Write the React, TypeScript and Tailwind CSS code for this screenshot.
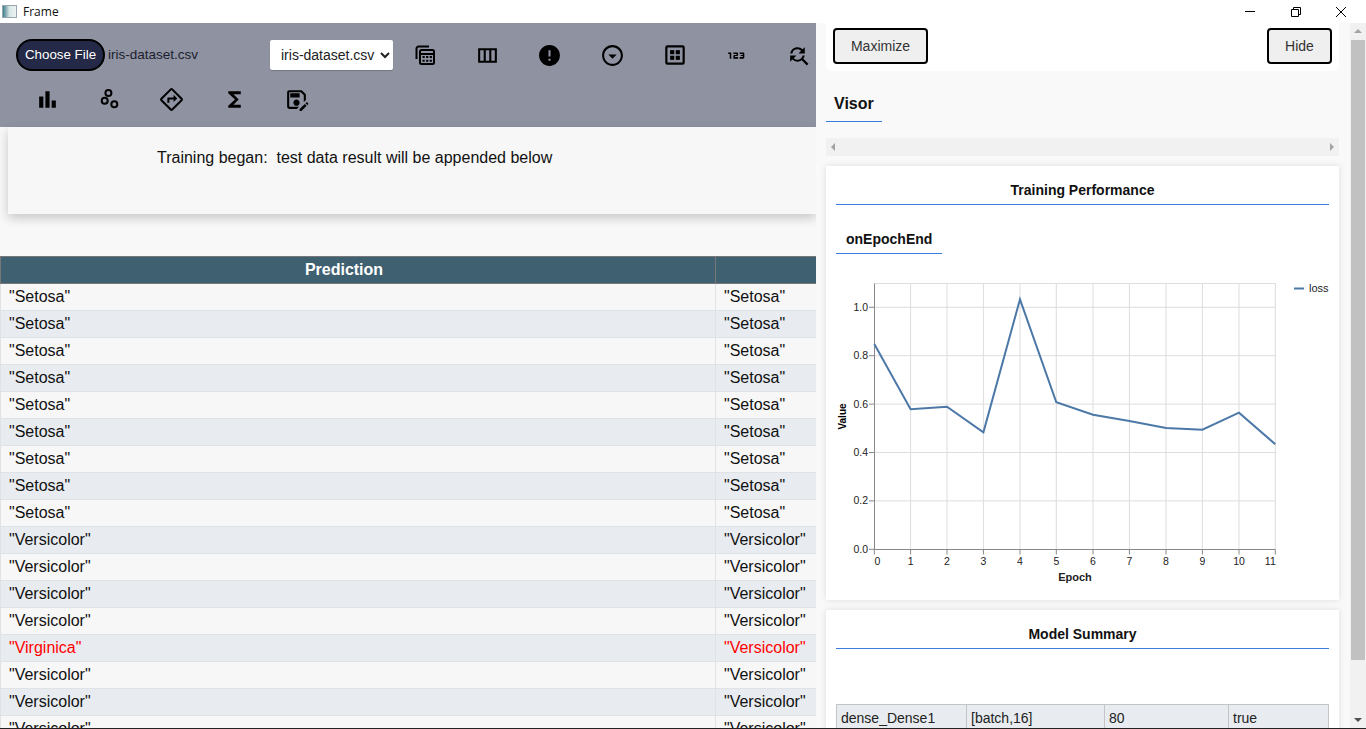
import React from "react";
import { MdBarChart, MdOutlineDirections, MdFunctions, MdOutlineSaveAs, MdError, MdOutlineArrowDropDownCircle, Md123, MdFindReplace, MdOutlineViewColumn } from "react-icons/md";

const sans = "font-['Liberation_Sans',Arial,sans-serif]";

function CalcStack() {
  return (
    <svg viewBox="0 0 24 24" className="w-[24px] h-[24px]" fill="none" stroke="#000" strokeWidth="2">
      <path d="M3.5 16V5.5a2 2 0 0 1 2-2H16" />
      <rect x="7" y="7" width="14" height="14" rx="1.5" />
      <path d="M7 11h14" />
      <path d="M9.5 14h10M9.5 17.8h10" strokeDasharray="2.2 1.4" strokeWidth="2" />
    </svg>
  );
}
function GridBox() {
  return (
    <svg viewBox="0 0 24 24" className="w-[26px] h-[26px] ml-[1px]" fill="#000">
      <path fillRule="evenodd" d="M5 3h14a2 2 0 0 1 2 2v14a2 2 0 0 1-2 2H5a2 2 0 0 1-2-2V5a2 2 0 0 1 2-2zm0 2v14h14V5H5z" />
      <rect x="7.5" y="7.5" width="3.8" height="3.8" />
      <rect x="12.7" y="7.5" width="3.8" height="3.8" />
      <rect x="7.5" y="12.7" width="3.8" height="3.8" />
      <rect x="12.7" y="12.7" width="3.8" height="3.8" />
    </svg>
  );
}
function Bubbles() {
  return (
    <svg viewBox="0 0 24 24" className="w-[24px] h-[24px]" fill="none" stroke="#000" strokeWidth="2">
      <circle cx="11.4" cy="5.9" r="3" />
      <circle cx="7.7" cy="13.7" r="3" />
      <circle cx="17.3" cy="17.3" r="3" />
    </svg>
  );
}

const rowOne = [
  <CalcStack />,
  <MdOutlineViewColumn size={25} color="#000" />,
  <MdError size={25} color="#000" />,
  <MdOutlineArrowDropDownCircle size={25} color="#000" />,
  <GridBox />,
  <Md123 size={25} color="#000" />,
  <MdFindReplace size={25} color="#000" />,
];
const rowTwo = [
  <MdBarChart size={25} color="#000" />,
  <Bubbles />,
  <MdOutlineDirections size={25} color="#000" />,
  <MdFunctions size={25} color="#000" />,
  <MdOutlineSaveAs size={25} color="#000" />,
];

const rows: [string, string, boolean?][] = [
  ...Array.from({ length: 9 }, () => ['"Setosa"', '"Setosa"'] as [string, string]),
  ...Array.from({ length: 4 }, () => ['"Versicolor"', '"Versicolor"'] as [string, string]),
  ['"Virginica"', '"Versicolor"', true],
  ...Array.from({ length: 3 }, () => ['"Versicolor"', '"Versicolor"'] as [string, string]),
];

const xs = [874.3, 910.6, 947, 983.4, 1020, 1056.3, 1093, 1129.4, 1166, 1202.4, 1239, 1275.3];
const ys = [549.3, 500.9, 452.5, 404.1, 355.7, 307.3];
const line = [
  [874.3, 344], [910.6, 409.3], [947, 406.7], [983.4, 432.3], [1020, 299.3], [1056.3, 402.3],
  [1093, 414.7], [1129.4, 421], [1166, 428], [1202.4, 429.7], [1239, 412.7], [1275.3, 444.3],
];

function Chart() {
  return (
    <svg viewBox="826 270 513 330" className="block w-[513px] h-[330px]" fontFamily="Liberation Sans, Arial, sans-serif">
      {xs.slice(1).map((x) => <line key={x} x1={x} x2={x} y1={283.5} y2={549.5} stroke="#ddd" />)}
      {ys.slice(1).map((y) => <line key={y} x1={874} x2={1275.5} y1={y} y2={y} stroke="#ddd" />)}
      <line x1={874} x2={1275.5} y1={283.5} y2={283.5} stroke="#ddd" />
      <line x1={874.5} x2={874.5} y1={283.5} y2={549.5} stroke="#888" />
      <line x1={874} x2={1275.5} y1={549.5} y2={549.5} stroke="#888" />
      {ys.map((y) => <line key={y} x1={869} x2={874} y1={y} y2={y} stroke="#888" />)}
      {xs.map((x) => <line key={x} x1={x} x2={x} y1={549.5} y2={554.5} stroke="#888" />)}
      {["0.0", "0.2", "0.4", "0.6", "0.8", "1.0"].map((t, i) => (
        <text key={t} x={868} y={ys[i] + 3.5} textAnchor="end" fontSize="10.5" fill="#222">{t}</text>
      ))}
      {xs.map((x, i) => (
        <text key={i} x={i === 11 ? x - 5 : i === 0 ? x + 3 : x} y={565} textAnchor="middle" fontSize="10.5" fill="#222">{i}</text>
      ))}
      <text x={1075} y={581} textAnchor="middle" fontSize="11" fontWeight="bold" fill="#222">Epoch</text>
      <text transform="translate(845.5 416.5) rotate(-90)" textAnchor="middle" fontSize="10" fontWeight="bold" fill="#000">Value</text>
      <polyline points={line.map((p) => p.join(",")).join(" ")} fill="none" stroke="#4c78a8" strokeWidth="2" />
      <line x1={1294} x2={1304} y1={288.5} y2={288.5} stroke="#4c78a8" strokeWidth="2" />
      <text x={1309} y={291.5} fontSize="11" fill="#222">loss</text>
    </svg>
  );
}

export default function App() {
  return (
    <div className={`${sans} w-[1366px] h-[729px] overflow-hidden flex flex-col bg-white border-b border-[#222] text-black`}>
      {/* Title bar */}
      <div className="h-[23px] shrink-0 flex items-center bg-white">
        <div className="ml-[2px] w-[15px] h-[13px] border border-[#9aa6ad] bg-gradient-to-r from-[#3f7f8c] via-[#d8e6e6] to-[#eef2f2]" />
        <span className="ml-[6px] text-[12px] font-['Open_Sans',sans-serif] text-[#111]">Frame</span>
        <div className="ml-auto flex items-center pr-[19px]">
          <svg width="12" height="12" viewBox="0 0 12 12" stroke="#000" fill="none"><path d="M1 5.5h10" /></svg>
          <svg className="ml-[34px]" width="12" height="12" viewBox="0 0 12 12" stroke="#000" fill="none"><path d="M1.5 3.5h7v7h-7zM3.5 3.5v-2h7v7h-2" /></svg>
          <svg className="ml-[33px]" width="12" height="12" viewBox="0 0 12 12" stroke="#000" fill="none"><path d="M1 1l10 10M11 1L1 11" /></svg>
        </div>
      </div>

      <div className="flex flex-1 min-h-0">
        {/* Left */}
        <div className="w-[816px] shrink-0 overflow-hidden bg-[#f8f8f8] flex flex-col">
          <div className="h-[104px] shrink-0 bg-[#8f92a1] pl-[16px] pt-[10px] flex flex-col">
            <div className="flex h-[44px] items-center">
              <div className="w-[254px] shrink-0 flex items-center">
                <button className="w-[89px] h-[32px] rounded-full bg-[#232946] border-[2px] border-black text-white text-[13.33px] whitespace-nowrap">Choose File</button>
                <span className="ml-[3px] text-[13.5px] text-[#1b1e2e] whitespace-nowrap">iris-dataset.csv</span>
              </div>
              <select className="w-[123px] shrink-0 mr-[1px] h-[30px] bg-white rounded-[2px] text-[14px] text-[#222] pl-[7px] shadow-[0_1px_1px_rgba(0,0,0,0.2)]" defaultValue="iris">
                <option value="iris">iris-dataset.csv</option>
              </select>
              {rowOne.map((ic, i) => (
                <div key={i} className="w-[62.3px] shrink-0 flex items-center justify-center">{ic}</div>
              ))}
            </div>
            <div className="flex h-[44px] items-center">
              {rowTwo.map((ic, i) => (
                <div key={i} className="w-[62.3px] shrink-0 flex items-center justify-center">{ic}</div>
              ))}
            </div>
          </div>
          <div className="ml-[8px] h-[87px] shrink-0 bg-[#f7f7f7] shadow-[0_4px_10px_rgba(0,0,0,0.2)] pl-[149px] pt-[21px] text-[16px] leading-[20px] text-[#111] whitespace-pre">
            Training began:  test data result will be appended below
          </div>
          <table className="mt-[42px] w-[916px] table-fixed border-collapse text-[16px] shrink-0">
            <colgroup>
              <col className="w-[715px]" />
              <col className="w-[201px]" />
            </colgroup>
            <thead>
              <tr className="h-[27px] bg-[#3f6070] text-white">
                <th className="border border-[#777] font-bold text-center p-0 pr-[28px]">Prediction</th>
                <th className="border border-[#777] p-0" />
              </tr>
            </thead>
            <tbody>
              {rows.map((r, i) => (
                <tr key={i} className={`h-[27px] ${i % 2 === 0 ? "bg-[#f7f7f7]" : "bg-[#e8ecf0]"} ${r[2] ? "text-[#ff0000]" : "text-[#111]"}`}>
                  <td className="border border-[#dfe3e6] px-[8px] py-0 whitespace-nowrap">{r[0]}</td>
                  <td className="border border-[#dfe3e6] px-[8px] py-0 whitespace-nowrap">{r[1]}</td>
                </tr>
              ))}
            </tbody>
          </table>
        </div>

        {/* Right */}
        <div className="flex-1 flex min-w-0 bg-[#f9f9f9]">
          <div className="w-[534px] pl-[10px] pr-[11px] overflow-hidden">
            <div className="h-[48px] bg-white rounded-b-[6px] flex items-start justify-between pl-[7px] pr-[7px] pt-[5px]">
              <button className="w-[95px] h-[36px] bg-[#efefef] border-2 border-black rounded-[4px] text-[14px] text-[#333]">Maximize</button>
              <button className="w-[65px] h-[36px] bg-[#efefef] border-2 border-black rounded-[4px] text-[14px] text-[#333]">Hide</button>
            </div>
            <div className="mt-[17px] w-[56px] h-[34px] border-b border-[#3b7ddd] pl-[8px] pt-[7px] text-[16px] leading-[18px] font-bold text-[#111]">Visor</div>
            <div className="mt-[16px] h-[18px] bg-[#f1f1f1] flex items-center justify-between px-[5px]">
              <div className="w-0 h-0 border-y-[4px] border-y-transparent border-r-[4px] border-r-[#a3a3a3]" />
              <div className="w-0 h-0 border-y-[4px] border-y-transparent border-l-[4px] border-l-[#a3a3a3]" />
            </div>
            <div className="mt-[10px] h-[434px] bg-white shadow-[0_0_6px_rgba(0,0,0,0.12)]">
              <div className="mx-[10px] h-[39px] border-b border-[#3b7ddd] pt-[16px] text-center text-[14px] leading-[16px] font-bold text-[#111]">Training Performance</div>
              <div className="ml-[10px] mt-[21px] w-[106px] h-[28px] border-b border-[#3b7ddd] pl-[10px] pt-[5px] text-[14px] leading-[16px] font-bold text-[#111]">onEpochEnd</div>
              <div className="mt-[16px]"><Chart /></div>
            </div>
            <div className="mt-[10px] h-[200px] bg-white shadow-[0_0_6px_rgba(0,0,0,0.12)]">
              <div className="mx-[10px] h-[39px] border-b border-[#3b7ddd] pt-[16px] text-center text-[14px] leading-[16px] font-bold text-[#111]">Model Summary</div>
              <table className="ml-[10px] mt-[55px] w-[492px] table-fixed border-collapse text-[14px] text-[#222]">
                <colgroup>
                  <col className="w-[130px]" /><col className="w-[138px]" /><col className="w-[124px]" /><col className="w-[100px]" />
                </colgroup>
                <tbody>
                  <tr className="h-[27px] bg-[#e8ecf0]">
                    {["dense_Dense1", "[batch,16]", "80", "true"].map((c) => (
                      <td key={c} className="border border-[#c4c4c4] px-[4px] py-0">{c}</td>
                    ))}
                  </tr>
                </tbody>
              </table>
            </div>
          </div>
          {/* Scrollbar */}
          <div className="w-[16px] bg-[#f1f1f1] flex flex-col items-center">
            <div className="mt-[6px] w-0 h-0 border-x-[4px] border-x-transparent border-b-[4px] border-b-[#a3a3a3]" />
            <div className="mt-[7px] w-[14px] h-[620px] bg-[#c1c1c1]" />
            <div className="mt-auto mb-[6px] w-0 h-0 border-x-[4px] border-x-transparent border-t-[4px] border-t-[#505050]" />
          </div>
        </div>
      </div>
    </div>
  );
}
